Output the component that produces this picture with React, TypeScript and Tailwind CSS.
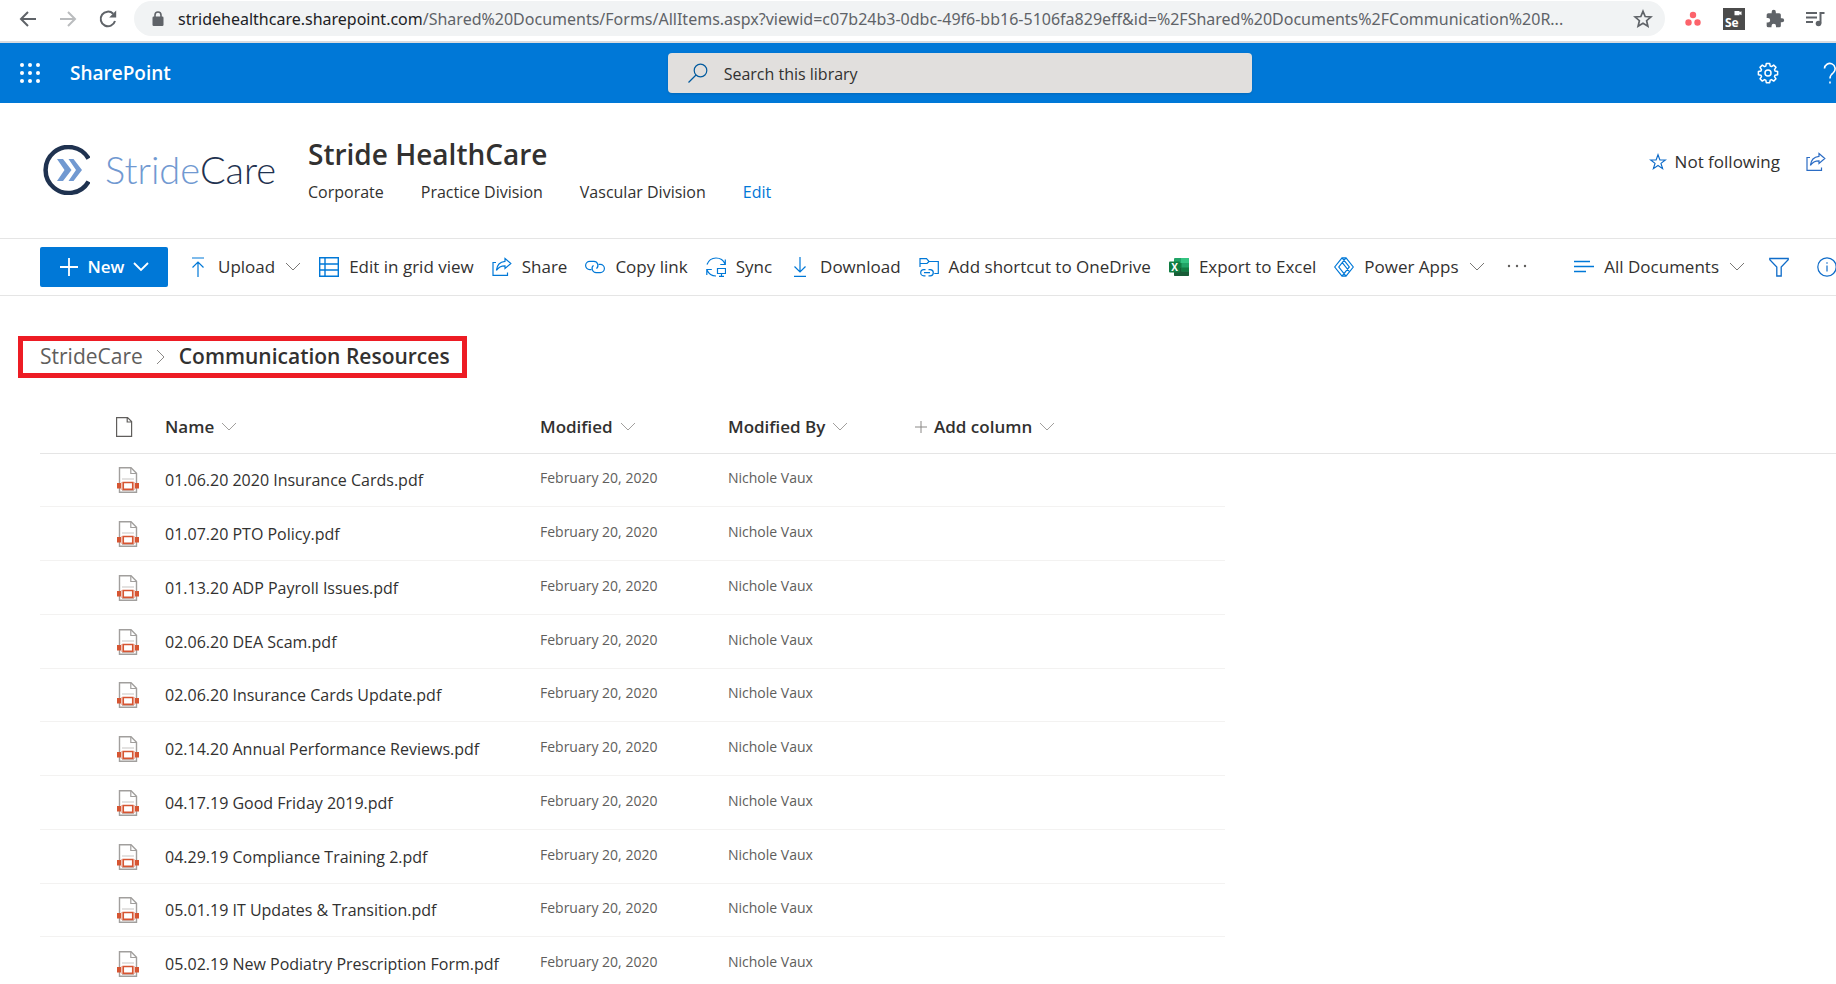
import type { ReactNode } from "react";

interface IconProps {
  className?: string;
}

interface LibraryFile {
  name: string;
  modified: string;
  modifiedBy: string;
}

const fileNames = [
  "01.06.20 2020 Insurance Cards.pdf",
  "01.07.20 PTO Policy.pdf",
  "01.13.20 ADP Payroll Issues.pdf",
  "02.06.20 DEA Scam.pdf",
  "02.06.20 Insurance Cards Update.pdf",
  "02.14.20 Annual Performance Reviews.pdf",
  "04.17.19 Good Friday 2019.pdf",
  "04.29.19 Compliance Training 2.pdf",
  "05.01.19 IT Updates & Transition.pdf",
  "05.02.19 New Podiatry Prescription Form.pdf",
];

const files: LibraryFile[] = fileNames.map((name) => ({
  name,
  modified: "February 20, 2020",
  modifiedBy: "Nichole Vaux",
}));

/* Icons */

function Icon({ className = "", children }: IconProps & { children: ReactNode }) {
  return (
    <svg
      viewBox="0 0 20 20"
      fill="none"
      stroke="currentColor"
      strokeWidth="1.2"
      aria-hidden="true"
      className={`size-5 shrink-0 ${className}`}
    >
      {children}
    </svg>
  );
}

function Chevron({ className = "text-[#797775]" }: IconProps) {
  return (
    <svg viewBox="0 0 16 16" fill="none" stroke="currentColor" aria-hidden="true" className={`size-4 shrink-0 ${className}`}>
      <path d="M1 4l7 7 7-7" />
    </svg>
  );
}

function ShareIcon() {
  return (
    <Icon>
      <path d="M4 5.5H1v12.900h14.500v-3" />
      <path d="M13 1.500l5.800 5-5.800 5V8.800c-4 0-6.700 1.500-8.600 4.600.5-5 3.500-8.600 8.600-9.100z" />
    </Icon>
  );
}

function PdfIcon() {
  return (
    <svg viewBox="0 0 22 26" aria-label="pdf" role="img" className="h-[26px] w-[22px]">
      <path d="M2.500 .7h11.500l5.500 5.500v19H2.500z" fill="#fff" stroke="#a19f9d" strokeWidth="1.400" />
      <path d="M13.800 .9v5.600h5.500" fill="none" stroke="#a19f9d" strokeWidth="1.200" />
      <path d="M5 12h12M5 23.400h12" stroke="#c8c6c4" strokeWidth="1.200" />
      <path d="M0 16h4v5.500H0zM18 16h4v5.500h-4z" fill="#d65532" />
      <path d="M6.200 15.500h9.600v6.800H6.200z" fill="#fff" stroke="#d65532" strokeWidth="1.700" />
      <path d="M4.500 15v8M17.500 15v8" stroke="#f0c4b8" />
    </svg>
  );
}

function ExcelIcon() {
  return (
    <svg viewBox="0 0 20 20" aria-hidden="true" className="size-5 shrink-0">
      <path d="M6 1h13a1 1 0 0 1 1 1v16a1 1 0 0 1-1 1H6a1 1 0 0 1-1-1V2a1 1 0 0 1 1-1z" fill="#21a366" />
      <path d="M12 1h7a1 1 0 0 1 1 1v4h-8z" fill="#33c481" />
      <path d="M5 6h7.500v4.500H5zM12.500 14.500V10.500H20v4z" fill="#107c41" />
      <path d="M5 10.500h7.500v4H20V18a1 1 0 0 1-1 1H6a1 1 0 0 1-1-1z" fill="#185c37" />
      <rect x="0" y="4.500" width="11" height="11" rx="1" fill="#107c41" />
      <text x="5.500" y="13.500" textAnchor="middle" fontSize="10" fontWeight="700" fontFamily="Open Sans, sans-serif" fill="#fff">
        X
      </text>
    </svg>
  );
}

/* Browser toolbar */

function BrowserBar() {
  return (
    <div className="flex h-[43px] shrink-0 items-start border-b-2 border-[#dadce0] bg-white pt-px pl-[18px] text-[#5f6368]">
      <div className="flex h-9 items-center gap-5">
        <button type="button" aria-label="Back">
          <Icon>
            <path d="M18 10H3M10 3l-7 7 7 7" strokeWidth="2" />
          </Icon>
        </button>
        <button type="button" aria-label="Forward" className="text-[#babcbe]">
          <Icon>
            <path d="M2 10h15M10 3l7 7-7 7" strokeWidth="2" />
          </Icon>
        </button>
        <button type="button" aria-label="Reload">
          <Icon>
            <path d="M17 12a7.300 7.300 0 1 1-1.800-7.200" strokeWidth="2" />
            <path d="M18.200 1.500v7h-7z" fill="currentColor" stroke="none" />
          </Icon>
        </button>
      </div>
      <div className="ml-4 flex h-[35px] min-w-0 flex-1 items-center rounded-full bg-[#f1f3f4] pr-3 pl-[18px]">
        <svg viewBox="0 0 12 16" aria-hidden="true" className="h-4 w-3 shrink-0">
          <rect x="0.500" y="5.500" width="11" height="9.500" rx="1.200" fill="#5f6368" />
          <path d="M3 6V4a3 3 0 0 1 6 0v2" fill="none" stroke="#5f6368" strokeWidth="1.600" />
        </svg>
        <span className="ml-[14px] min-w-0 flex-1 truncate font-['Noto_Sans',sans-serif] text-base">
          <span className="text-[#202124]">stridehealthcare.sharepoint.com</span>
          /Shared%20Documents/Forms/AllItems.aspx?viewid=c07b24b3-0dbc-49f6-bb16-5106fa829eff&amp;id=%2FShared%20Documents%2FCommunication%20R...
        </span>
        <button type="button" aria-label="Bookmark this page" className="ml-4">
          <Icon>
            <path d="M10 2.300l2.200 5.200 5.700.5-4.300 3.700 1.300 5.500-4.900-2.900-4.900 2.900 1.300-5.500L2.100 8l5.700-.5z" strokeWidth="1.700" />
          </Icon>
        </button>
      </div>
      <div className="flex h-9 w-[171px] shrink-0 items-center gap-5 pl-[18px]">
        <svg viewBox="0 0 20 20" fill="#fc636b" aria-hidden="true" className="size-5">
          <circle cx="10" cy="6" r="3.200" />
          <circle cx="5.500" cy="13.500" r="3.200" />
          <circle cx="14.500" cy="13.500" r="3.200" />
        </svg>
        <svg viewBox="0 0 22 22" aria-hidden="true" className="size-[22px]">
          <rect width="22" height="22" fill="#4b4b4b" />
          <path d="M11.500 3h5v1.300l2-1.100v4l-2-1.100v1.200h-5z" fill="#fff" />
          <text x="2" y="19" fontSize="12" fontWeight="700" fontFamily="Open Sans, sans-serif" fill="#fff">
            Se
          </text>
        </svg>
        <svg viewBox="0 0 24 24" fill="currentColor" aria-hidden="true" className="size-5">
          <path d="M20.500 11H19V7a2 2 0 0 0-2-2h-4V3.500a2.500 2.500 0 0 0-5 0V5H4a2 2 0 0 0-2 2v3.800h1.500a2.700 2.700 0 0 1 0 5.400H2V20a2 2 0 0 0 2 2h3.800v-1.500a2.700 2.700 0 0 1 5.400 0V22H17a2 2 0 0 0 2-2v-4h1.500a2.500 2.500 0 0 0 0-5z" />
        </svg>
        <Icon>
          <path d="M1 4h11M1 8.500h11M1 13h7" strokeWidth="2" />
          <path d="M15.500 14.500V4h4" strokeWidth="2" />
          <circle cx="13.500" cy="14.500" r="2.800" fill="currentColor" stroke="none" />
        </Icon>
      </div>
    </div>
  );
}

/* SharePoint suite bar */

function SuiteBar() {
  return (
    <header className="grid h-[60px] shrink-0 grid-cols-[8fr_7fr_7fr] items-center bg-[#0078d7] text-white">
      <div className="flex items-center gap-[30px] pl-5">
        <button type="button" aria-label="App launcher">
          <svg viewBox="0 0 20 20" fill="currentColor" aria-hidden="true" className="size-5">
            {[2, 10, 18].map((y) => [2, 10, 18].map((x) => <circle key={`${x}-${y}`} cx={x} cy={y} r="2" />))}
          </svg>
        </button>
        <a href="#" className="text-[19px] font-semibold">
          SharePoint
        </a>
      </div>
      <label className="flex h-10 items-center gap-4 rounded bg-[#e1dfdd] pl-5 text-[#005a9e] shadow-sm">
        <Icon>
          <circle cx="12.500" cy="7.500" r="6.300" />
          <path d="M8 12L.5 19.500" />
        </Icon>
        <input
          type="search"
          aria-label="Search this library"
          placeholder="Search this library"
          className="min-w-0 flex-1 bg-transparent pt-0.5 text-base text-[#323130] outline-none placeholder:text-[#323130]"
        />
      </label>
      <div className="-mr-px flex items-center justify-end gap-11">
        <button type="button" aria-label="Settings">
          <svg viewBox="0 0 22 22" fill="none" stroke="currentColor" strokeWidth="1.500" strokeLinejoin="round" aria-hidden="true" className="size-[22px]">
            <path d="M9.300 1.500h3.400l.5 2.600 1.300.5 2.200-1.500 2.300 2.300-1.500 2.200.5 1.300 2.600.5v3.400l-2.600.5-.5 1.300 1.500 2.200-2.300 2.300-2.200-1.500-1.300.5-.5 2.600H9.300l-.5-2.600-1.300-.5-2.200 1.500L3 16.800l1.500-2.200-.5-1.300-2.600-.5V9.400L4 8.900l.5-1.300L3 5.400l2.300-2.300 2.200 1.500 1.300-.5z" />
            <circle cx="11" cy="11" r="3" />
          </svg>
        </button>
        <button type="button" aria-label="Help">
          <svg viewBox="0 0 14 22" fill="none" stroke="currentColor" strokeWidth="1.600" aria-hidden="true" className="h-[22px] w-[14px]">
            <path d="M1.500 6.500a5.300 5.300 0 1 1 9 4C8 12.500 7 13.500 7 16.500" />
            <path d="M7 19.500v2" />
          </svg>
        </button>
      </div>
    </header>
  );
}

/* Site header */

function SiteHeader() {
  return (
    <div className="flex h-[136px] shrink-0 items-start border-b border-[#e5e5e5] pl-[42px]">
      <a href="#" className="mt-[42px] flex w-[266px] items-start gap-[15px]">
        <svg viewBox="0 0 48 50" fill="none" aria-hidden="true" className="h-[50px] w-12">
          <path d="M46.500 13.500A23 23 0 1 0 46.500 36.500" stroke="#1f3250" strokeWidth="4.500" />
          <path d="M15 14h6l8.500 11L21 36h-6l7.500-11z" fill="#7199d1" />
          <path d="M26.500 14h5L40 25l-8.500 11h-5L34 25z" fill="#7199d1" />
        </svg>
        <span className="mt-1 font-['Lato',sans-serif] text-[38px] leading-10 font-light text-[#7199d1]">
          Stride<span className="text-[#1f3250]">Care</span>
        </span>
      </a>
      <div className="mt-[31px] flex-1">
        <h1 className="text-[28px] leading-10 font-semibold text-[#323130]">Stride HealthCare</h1>
        <nav className="mt-1 flex gap-[37px] text-base leading-7">
          <a href="#">Corporate</a>
          <a href="#">Practice Division</a>
          <a href="#">Vascular Division</a>
          <a href="#" className="text-[#0078d7]">
            Edit
          </a>
        </nav>
      </div>
      <div className="mt-[45px] flex items-center gap-[26px] pr-[10px]">
        <button type="button" className="flex items-center gap-2 text-[17px] leading-7">
          <svg viewBox="0 0 20 20" fill="none" stroke="#0f6cc9" strokeWidth="1.300" aria-hidden="true" className="size-[18px]">
            <path d="M10 2l2.100 5.800h6l-4.800 3.700 1.800 5.900-5.100-3.500-5.100 3.500 1.800-5.900L1.900 7.800h6z" />
          </svg>
          Not following
        </button>
        <button type="button" aria-label="Share site" className="text-[#2b6cc4]">
          <ShareIcon />
        </button>
      </div>
    </div>
  );
}

/* Command bar */

function Command({ icon, label, menu }: { icon: ReactNode; label: string; menu?: boolean }) {
  return (
    <button type="button" className="flex shrink-0 items-center gap-[10px] whitespace-nowrap">
      <span className="flex text-[#0078d7]">{icon}</span>
      {label}
      {menu && <Chevron />}
    </button>
  );
}

function CommandBar() {
  return (
    <div className="flex h-[57px] shrink-0 items-center gap-5 border-b border-[#e5e5e5] pl-10 text-[17px]">
      <button type="button" className="flex h-10 w-32 shrink-0 items-center justify-center gap-[9px] rounded-xs bg-[#0078d7] font-semibold text-white">
        <Icon>
          <path d="M10 1v18M1 10h18" strokeWidth="1.800" />
        </Icon>
        New
        <svg viewBox="0 0 16 16" fill="none" stroke="currentColor" strokeWidth="1.800" aria-hidden="true" className="size-4">
          <path d="M1 4l7 7 7-7" />
        </svg>
      </button>
      <div className="flex items-center gap-[18px]">
        <Command
          label="Upload"
          menu
          icon={
            <Icon>
              <path d="M4 1h12M10 20V5M4.500 10.500L10 5l5.500 5.500" />
            </Icon>
          }
        />
        <Command
          label="Edit in grid view"
          icon={
            <Icon>
              <path d="M.7.7h18.600v18.600H.7zM6 .7v18.600M.7 7h18.600M.7 13h18.600" strokeWidth="1.400" />
            </Icon>
          }
        />
        <Command label="Share" icon={<ShareIcon />} />
        <Command
          label="Copy link"
          icon={
            <Icon>
              <path d="M6.500 12.600H4.700a4.100 4.100 0 0 1 0-8.200h4.200a4.100 4.100 0 0 1 2.600 7.200" />
              <path d="M13.500 7.400h1.800a4.100 4.100 0 0 1 0 8.200h-4.200a4.100 4.100 0 0 1-2.600-7.200" />
            </Icon>
          }
        />
        <Command
          label="Sync"
          icon={
            <Icon>
              <path d="M1 7.500C2.500 3.500 6 1 10 1c4 0 7.500 2.200 9 6M19.300 2.500V7.500h-5" />
              <path d="M.8 18v-5.500h5M1 13c1.500 3.500 4.500 6 9 6" />
              <path d="M11.500 11.500h8v5h-8zM15.500 16.500v3M13 19.400h5" />
            </Icon>
          }
        />
        <Command
          label="Download"
          icon={
            <Icon>
              <path d="M4 19.300h12M10 0v15M4.500 9.500L10 15l5.500-5.500" />
            </Icon>
          }
        />
        <Command
          label="Add shortcut to OneDrive"
          icon={
            <Icon>
              <path d="M1 10V1.700h6.500l2.500 2.800h9.300v12h-4M1 6.500h7l2-2" />
              <path d="M6.500 18.800H4.800a3.100 3.100 0 0 1 0-6.200h1.700M9.500 12.600h1.700a3.100 3.100 0 0 1 0 6.200H9.500M5 15.700h6" />
            </Icon>
          }
        />
        <Command label="Export to Excel" icon={<ExcelIcon />} />
        <Command
          label="Power Apps"
          menu
          icon={
            <Icon>
              <path d="M8 .8h4L19.300 10 12 19.200H8L.7 10zM12 .8L4.800 10l7.200 9.200M8 .8l3.700 4.600M8 19.200l7.300-9.300-3.600-4.500M8.300 5.600l7 8.900" />
            </Icon>
          }
        />
        <button type="button" aria-label="More commands" className="ml-1">
          <svg viewBox="0 0 20 20" fill="#605e5c" aria-hidden="true" className="size-5">
            <circle cx="2" cy="9" r="1.200" />
            <circle cx="10" cy="9" r="1.200" />
            <circle cx="18" cy="9" r="1.200" />
          </svg>
        </button>
      </div>
      <div className="ml-auto flex items-center gap-6">
        <Command
          label="All Documents"
          menu
          icon={
            <Icon>
              <path d="M0 4.500h16M0 9.500h20M0 14.500h12" strokeWidth="1.300" />
            </Icon>
          }
        />
        <button type="button" aria-label="Filter" className="text-[#0f6cc9]">
          <Icon>
            <path d="M.8 1.500h18.400v1.300l-7 7.200v9H7.800v-9l-7-7.200z" strokeWidth="1.300" />
          </Icon>
        </button>
        <button type="button" aria-label="Details" className="-mr-px ml-1 text-[#0f6cc9]">
          <Icon>
            <circle cx="10" cy="10" r="9.200" />
            <path d="M10 8.500v6M10 5.300v1.500" />
          </Icon>
        </button>
      </div>
    </div>
  );
}

/* Document list */

function ColumnHeader({ label }: { label: string }) {
  return (
    <th scope="col" className="border-b border-[#e5e5e5] p-0 text-left text-[17px] font-semibold">
      <button type="button" className="flex items-center gap-[7px]">
        {label}
        <Chevron className="text-[#a19f9d]" />
      </button>
    </th>
  );
}

function DocumentTable() {
  return (
    <div className="mt-[22px] pl-10">
      <table className="w-full table-fixed border-separate border-spacing-0 text-base">
        <colgroup>
          <col className="w-[125px]" />
          <col className="w-[375px]" />
          <col className="w-[188px]" />
          <col className="w-[187px]" />
          <col className="w-[310px]" />
          <col />
        </colgroup>
        <thead>
          <tr className="h-[54px]">
            <th scope="col" className="border-b border-[#e5e5e5] p-0 pl-[75px]">
              <svg viewBox="0 0 20 20" fill="none" stroke="#605e5c" strokeWidth="1.200" role="img" aria-label="File type" className="size-5">
                <path d="M1.600.6h11l4 4v14.800h-15zM12.200.6v4.400h4.400" />
              </svg>
            </th>
            <ColumnHeader label="Name" />
            <ColumnHeader label="Modified" />
            <ColumnHeader label="Modified By" />
            <th scope="col" className="border-b border-[#e5e5e5] p-0 text-left text-[17px] font-semibold">
              <button type="button" className="flex items-center gap-[7px]">
                <svg viewBox="0 0 12 12" stroke="#8a8886" aria-hidden="true" className="size-3">
                  <path d="M6 0v12M0 6h12" />
                </svg>
                Add column
                <Chevron className="text-[#a19f9d]" />
              </button>
            </th>
            <td className="border-b border-[#e5e5e5]" />
          </tr>
        </thead>
        <tbody>
          {files.map((file) => (
            <tr key={file.name} className="h-[54px] [&:nth-child(4n+1)]:h-[53px]">
              <td className="border-b border-[#f3f2f1] p-0 pl-[77px]">
                <PdfIcon />
              </td>
              <td className="border-b border-[#f3f2f1] p-0">
                <a href="#">{file.name}</a>
              </td>
              <td className="border-b border-[#f3f2f1] p-0 pb-1 text-sm text-[#605e5c]">{file.modified}</td>
              <td className="border-b border-[#f3f2f1] p-0 pb-1 text-sm text-[#605e5c]">{file.modifiedBy}</td>
              <td className="border-b border-[#f3f2f1] p-0" />
              <td className="p-0" />
            </tr>
          ))}
        </tbody>
      </table>
    </div>
  );
}

export default function App() {
  return (
    <div className="flex h-screen flex-col overflow-hidden bg-white font-['Open_Sans','Noto_Sans',sans-serif] text-[#323130]">
      <BrowserBar />
      <SuiteBar />
      <SiteHeader />
      <CommandBar />
      <main>
        <nav
          aria-label="Breadcrumb"
          className="mt-10 ml-[18px] flex h-[42px] w-fit items-center gap-3 border-[5px] border-[#ed1c24] pr-3 pl-[17px] text-[21px]"
        >
          <a href="#" className="text-[#605e5c]">
            StrideCare
          </a>
          <svg viewBox="0 0 12 16" fill="none" stroke="#8a8886" aria-hidden="true" className="h-4 w-3">
            <path d="M2 1l7 7-7 7" />
          </svg>
          <span className="font-semibold">Communication Resources</span>
        </nav>
        <DocumentTable />
      </main>
    </div>
  );
}
